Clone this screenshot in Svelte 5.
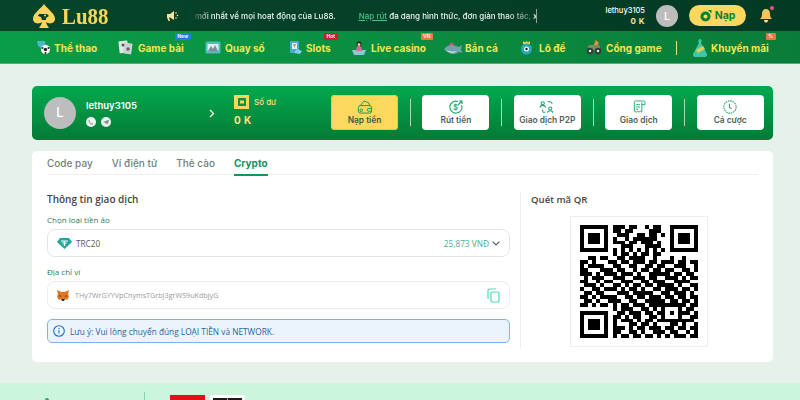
<script>
  const qr = [
    "11111110111011001011001111111",
    "10000010110110000111001000001",
    "10111010011100110110101011101",
    "10111010100101111110001011101",
    "10111010111011011101001011101",
    "10000010001110001111001000001",
    "11111110101010101010101111111",
    "00000000101101011011000000000",
    "00110110011011110010001001000",
    "11010001101101110110111011011",
    "10111100110011001101100111001",
    "11000111011001011011011001101",
    "11101011101110100111110110110",
    "01011100111001110110011101011",
    "11001011001110011011100111100",
    "01110100110101101101111010011",
    "10011011101011010011011101101",
    "01101100011101111100110111010",
    "11010111100110110111011011011",
    "01101001110011001111101101101",
    "11010110101101110111111111011",
    "00000000101110011010100010110",
    "11111110011011101101101011101",
    "10000010110101100110100010011",
    "10111010101110101101111111110",
    "10111010100011011010001101001",
    "10111010111010110111011011011",
    "10000010110011010011101100101",
    "11111110101101101101010111011"
  ];
  const qrPath = qr
    .flatMap((row, y) => [...row].map((c, x) => (c === "1" ? `M${x} ${y}h1v1h-1z` : "")))
    .join("");
  const tabs = ["Code pay", "Ví điện tử", "Thẻ cào", "Crypto"];
</script>

<div class="page">
  <header class="top">
    <div class="logo">
      <svg width="24" height="26" viewBox="0 0 24 26">
        <path d="M12 1C9 6 1 10 1 16c0 4 5 6 9 3-.3 2-1.500 4-3 6h10c-1.500-2-2.700-4-3-6 4 3 9 1 9-3C23 10 15 6 12 1z" fill="#fcd65b" />
        <path d="M7 11h8l2 2-3 2v2H10l-1-3-3-1z" fill="#063f26" />
        <circle cx="13" cy="12.500" r="1" fill="#fcd65b" />
      </svg>
      <span class="logo-text">Lu88</span>
    </div>
    <svg class="mega" width="12" height="10" viewBox="0 0 12 10">
      <path d="M0 3h3l4-3v9L3 6.500H2L3 10H1.500L0 6.500z" fill="#f6e3a0" />
      <circle cx="9" cy="2" r=".8" fill="#f6e3a0" /><circle cx="10.500" cy="4.500" r=".8" fill="#f6e3a0" /><circle cx="9" cy="7" r=".8" fill="#f6e3a0" />
    </svg>
    <div class="marquee">
      <span class="marquee-text">Tin tức mới nhất về mọi hoạt động của Lu88.<a class="mq-link" href="#top">Nạp rút</a> đa dạng hình thức, đơn giản thao tác, xử lý nhanh</span>
    </div>
    <div class="userbox">
      <span class="uname">lethuy3105</span>
      <b class="ubal">0 K</b>
    </div>
    <div class="ava-s">L</div>
    <button class="nap">
      <svg width="12" height="12" viewBox="0 0 12 12">
        <circle cx="5.500" cy="6.500" r="5" fill="#0a7f3a" />
        <circle cx="5.500" cy="6.500" r="2" fill="#fdd85d" />
        <path d="M8 0h3.500v3.500z" fill="#0a7f3a" />
      </svg>
      Nạp
    </button>
    <div class="bell">
      <svg width="14" height="15" viewBox="0 0 14 15">
        <path d="M7 1c3 0 4 2.500 4 5 0 3 1 4 2 5H1c1-1 2-2 2-5 0-2.500 1-5 4-5z" fill="#f5c35a" />
        <path d="M5 12h4c0 2-1 2.500-2 2.500S5 14 5 12z" fill="#f9dc8b" />
      </svg>
      <i class="dot"></i>
    </div>
  </header>

  <nav class="nav">
    <a class="nv o18" href="#top">
      <svg width="15" height="15" viewBox="0 0 15 15"><path d="M1 1h8l1 5-5 2-3-2z" fill="#4bb6c9" /><circle cx="9.500" cy="9.500" r="4.500" fill="#fff" /><circle cx="9.500" cy="9.500" r="1.700" fill="#222" /><circle cx="6.500" cy="8" r="1" fill="#222" /><circle cx="12.500" cy="8" r="1" fill="#222" /><circle cx="9.500" cy="13" r="1" fill="#222" /></svg>
      <span>Thể thao</span>
    </a>
    <a class="nv o20" href="#top">
      <svg width="15" height="15" viewBox="0 0 15 15"><rect x="1" y="1" width="9" height="12" rx="1" fill="#dfe7e6" transform="rotate(-6 5 7)" /><rect x="6" y="3" width="8" height="11" rx="1" fill="#c7d4d2" transform="rotate(8 10 8)" /><circle cx="5" cy="5" r="1.500" fill="#555" /><circle cx="10" cy="9" r="1.700" fill="#6b5a62" /></svg>
      <span class="lbl">Game bài<i class="tag blue">New</i></span>
    </a>
    <a class="nv o20" href="#top">
      <svg width="16" height="13" viewBox="0 0 16 13"><rect x=".5" y=".5" width="15" height="12" rx="1.500" fill="#4cc0bd" /><rect x="2.500" y="3" width="11" height="7" fill="#d8f3ee" /><path d="M3 10l3-5 2 3 2-4 3 6z" fill="#7a8ea0" /></svg>
      <span>Quay số</span>
    </a>
    <a class="nv o18" href="#top">
      <svg width="15" height="15" viewBox="0 0 15 15"><rect x="2" y="1" width="9" height="12" rx="1" fill="#49a9d4" /><rect x="4" y="3" width="5" height="6" fill="#dff1f5" /><path d="M5 4h3l-1.500 4z" fill="#e5895a" /><path d="M9 9l5 2-2 3-6-1z" fill="#7fd0e6" /></svg>
      <span class="lbl">Slots<i class="tag red">Hot</i></span>
    </a>
    <a class="nv o20" href="#top">
      <svg width="16" height="16" viewBox="0 0 16 16"><path d="M1 10h14l-2 5H3z" fill="#86c9d8" /><circle cx="8" cy="4" r="2.500" fill="#2a1c1c" /><path d="M5 11c0-3 1-5 3-5s3 2 3 5z" fill="#d66b8e" /><circle cx="8" cy="4.500" r="1.500" fill="#eec2a8" /></svg>
      <span class="lbl">Live casino<i class="tag orange">VN</i></span>
    </a>
    <a class="nv o21" href="#top">
      <svg width="19" height="12" viewBox="0 0 19 12"><path d="M0 7c3-4 8-5 12-3l3 1 3-2-1 5 2 3-4-1c-4 3-10 3-15-3z" fill="#6fa3b0" /><path d="M5 3l3-3 2 3z" fill="#d5566a" /><path d="M2 8c4 2 8 2 11 1-3 3-8 2-11-1z" fill="#e6f2f2" /></svg>
      <span>Bắn cá</span>
    </a>
    <a class="nv o19" href="#top">
      <svg width="13" height="15" viewBox="0 0 13 15"><path d="M3 1l2 1.500L6.500 1 8 2.500 10 1v3H3z" fill="#f0cf55" /><circle cx="6.500" cy="9" r="5.500" fill="#27a7b8" /><circle cx="6.500" cy="9" r="2.500" fill="#fff" /><circle cx="6.500" cy="9" r="1.200" fill="#123" /></svg>
      <span>Lô đề</span>
    </a>
    <a class="nv o20" href="#top">
      <svg width="16" height="15" viewBox="0 0 16 15"><path d="M10 0l3 3-2 3H7z" fill="#ef8a3a" /><rect x="2" y="5" width="12" height="5" rx="2" fill="#7d8c5b" /><circle cx="4" cy="11" r="3.200" fill="#2f3b3a" /><circle cx="12" cy="11" r="3.200" fill="#2f3b3a" /><circle cx="4" cy="11" r="1.300" fill="#e6e6d8" /><circle cx="12" cy="11" r="1.300" fill="#e6e6d8" /></svg>
      <span>Cổng game</span>
    </a>
    <i class="nav-div"></i>
    <a class="nv o19" href="#top">
      <svg width="16" height="18" viewBox="0 0 16 18"><path d="M8 0c2 0 2 3 1 4l6 11c.5 2-1 3-2 3H3c-1 0-2.500-1-2-3L7 4C6 3 6 0 8 0z" fill="#3fc7a5" /><path d="M4 11l7-4 2 3-7 4z" fill="#d9cf58" /></svg>
      <span class="lbl">Khuyến mãi<i class="tag orange">%</i></span>
    </a>
  </nav>

  <main class="main">
    <section class="hero">
      <div class="ava">L</div>
      <div class="who">
        <b>lethuy3105</b>
        <div class="contact">
          <svg width="10" height="10" viewBox="0 0 10 10"><circle cx="5" cy="5" r="5" fill="#eef5f1" /><path d="M3 2.500l1 1.500-.5.700c.4.800 1 1.400 1.800 1.800L6 6l1.500 1C7 8 6 8 4.500 7 3 6 2 4 3 2.500z" fill="#7d9a8b" /></svg>
          <svg width="10" height="10" viewBox="0 0 10 10"><circle cx="5" cy="5" r="5" fill="#eef5f1" /><path d="M2 5l6-2.500L7 7.500 5 6.300 4.200 7 4 5.700z" fill="#7d9a8b" /></svg>
        </div>
      </div>
      <svg class="chev" width="6" height="9" viewBox="0 0 6 9"><path d="M1 1l3.500 3.500L1 8" fill="none" stroke="#fff" stroke-width="1.300" /></svg>
      <div class="bal">
        <div class="bal-top">
          <svg width="15" height="14" viewBox="0 0 15 14"><path d="M1 0h14v14H1c-.6 0-1-.4-1-1V1c0-.6.4-1 1-1z" fill="#fcd65b" /><rect x="4" y="3" width="8" height="8" fill="#0a9446" /><rect x="6" y="5.500" width="4" height="3" fill="#fcd65b" /></svg>
          <span>Số dư</span>
        </div>
        <b>0 K</b>
      </div>
      <div class="acts">
        <button class="act yellow">
          <svg width="16" height="15" viewBox="0 0 16 15" fill="none" stroke="#12925a"><path d="M3 6l4-5 5 2 1 3" /><rect x="1" y="6" width="14" height="8" rx="2" /><circle cx="4" cy="11" r="1.400" /><path d="M15 9h-3a1 1 0 000 3h3" /></svg>
          Nạp tiền
        </button>
        <i class="sep"></i>
        <button class="act">
          <svg width="14" height="14" viewBox="0 0 14 14" fill="none" stroke="#1fa86c" stroke-width="1.100"><path d="M9 1.500A6 6 0 1012.500 5" /><path d="M9 5l4-4M10 1h3v3" /><text x="4.200" y="10" font-size="7" font-weight="700" fill="#1fa86c" stroke="none" font-family="Inter">$</text></svg>
          Rút tiền
        </button>
        <i class="sep"></i>
        <button class="act">
          <svg width="15" height="13" viewBox="0 0 15 13" fill="none" stroke="#1fa86c"><circle cx="3.500" cy="3" r="1.500" /><path d="M1 7c0-1.500 1-2 2.500-2S6 5.500 6 7" /><circle cx="10.500" cy="8" r="1.500" /><path d="M8 12c0-1.500 1-2 2.500-2s2.500.5 2.500 2" /><path d="M8 1.500h3l1.500 2M3 9l1 2.500h2" /></svg>
          Giao dịch P2P
        </button>
        <i class="sep"></i>
        <button class="act">
          <svg width="14" height="15" viewBox="0 0 14 15" fill="none" stroke="#1fa86c"><path d="M3 1h9a1.500 1.500 0 011.500 1.500V5H10" /><path d="M10 2.500V13l-1.500-1L7 13l-1.500-1L4 13l-2-1V2.500A1.500 1.500 0 013 1" /><path d="M4 5h4M4 7.500h4M4 10h2" /></svg>
          Giao dịch
        </button>
        <i class="sep"></i>
        <button class="act">
          <svg width="13" height="13" viewBox="0 0 13 13" fill="none" stroke="#1fa86c"><circle cx="6.500" cy="6.500" r="5.700" stroke-dasharray="1.500 .7" /><path d="M6 3.500v3.300l2 1.500" /></svg>
          Cá cược
        </button>
      </div>
    </section>

    <section class="panel">
      <div class="tabs">
        {#each tabs as t, i}
          <span class={i === 3 ? "tab on" : "tab"}>{t}</span>
        {/each}
      </div>
      <div class="body">
        <div class="form">
          <h3>Thông tin giao dịch</h3>
          <label for="coin">Chọn loại tiền ảo</label>
          <div class="field sel" id="coin">
            <svg width="15" height="11" viewBox="0 0 15 11"><path d="M3 0h9l3 4-7.500 7L0 4z" fill="#1fa89a" /><path d="M4 2.500h7v1H8.200v1c1 0 1.800.2 1.800.5s-.8.500-1.800.500V8H6.800V5.500C5.800 5.500 5 5.300 5 5s.8-.5 1.800-.5v-1H4z" fill="#fff" /></svg>
            <span class="coin">TRC20</span>
            <span class="rate">25,873 VNĐ</span>
            <svg width="8" height="5" viewBox="0 0 8 5"><path d="M.7.700L4 4 7.300.700" fill="none" stroke="#555" stroke-width="1.100" /></svg>
          </div>
          <label class="second" for="addr">Địa chỉ ví</label>
          <div class="field ad" id="addr">
            <svg width="12" height="11" viewBox="0 0 12 11"><path d="M0 0l4.500 2h3L12 0l-1 4 1 3-2 3-2.500-1h-3L2 10 0 7l1-3z" fill="#e2761b" /><path d="M4 9h4l-1 2H5zM2 5l2 1-1 1zM10 5L8 6l1 1z" fill="#3b2a1e" /></svg>
            <span class="addr">THy7WrGYYVpCnymsTGrbJ3grWS9uKdbjyG</span>
            <svg width="13" height="15" viewBox="0 0 13 15" fill="none" stroke="#4ddcb0" stroke-width="1.200"><path d="M9 1H2.500A1.500 1.500 0 001 2.500V11" /><rect x="4" y="4" width="8" height="10" rx="1" /></svg>
          </div>
          <div class="note">
            <svg width="12" height="12" viewBox="0 0 12 12" fill="none" stroke="#1f6fc0" stroke-width="1.100"><circle cx="6" cy="6" r="5.300" /><path d="M6 5.300v3.200" /><path d="M6 3v1.200" /></svg>
            <span><b>Lưu ý:</b> Vui lòng chuyển đúng LOẠI TIỀN và NETWORK.</span>
          </div>
        </div>
        <div class="qrcol">
          <h3>Quét mã QR</h3>
          <div class="qrbox">
            <svg width="118" height="113" viewBox="0 0 29 29" preserveAspectRatio="none" shape-rendering="crispEdges"><path d={qrPath} fill="#000" /></svg>
          </div>
        </div>
      </div>
    </section>
  </main>

  <footer class="foot">
    <i class="f-dot"></i>
    <i class="f-line"></i>
    <i class="f-red"></i>
    <i class="f-black"></i>
  </footer>
</div>

<style>
  :global(body) { margin: 0; background: #e7f1ec; overflow: hidden; }
  .page { width: 800px; height: 400px; overflow: hidden; font-family: "Open Sans", "Liberation Sans", sans-serif; display: flex; flex-direction: column; }
  a { text-decoration: none; color: inherit; }
  i { font-style: normal; display: block; }
  button { border: 0; font: inherit; padding: 0; }
  h3 { margin: 0; font-size: 10px; font-weight: 600; color: #454545; line-height: 14px; }

  .top { height: 31px; flex: none; background: linear-gradient(90deg, #06452a, #033a24); display: flex; align-items: center; padding-left: 32px; box-sizing: border-box; }
  .logo { width: 135px; display: flex; align-items: center; flex: none; }
  .logo svg { flex: none; }
  .logo-text { font: bold 24px "Liberation Serif", serif; color: #fcd65b; margin-left: 6px; transform: scaleX(.87); transform-origin: left center; line-height: 1; }
  .mega { flex: none; }
  .marquee { width: 347px; margin-left: 11px; height: 14px; overflow: hidden; border-right: 1px solid #8fa89a; box-sizing: border-box; flex: none; -webkit-mask-image: linear-gradient(90deg, transparent 0, #000 22px, #000 315px, rgba(0,0,0,.4) 340px, #000 345px); mask-image: linear-gradient(90deg, transparent 0, #000 22px, #000 315px, rgba(0,0,0,.4) 340px, #000 345px); }
  .marquee-text { display: block; white-space: nowrap; font: 500 8px/14px "Inter", sans-serif; color: #eef3ef; margin-left: -24px; }
  .mq-link { color: #4fbf8a; text-decoration: underline; margin-left: 23px; margin-right: 0; }
  .userbox { margin-left: 71px; width: 37px; flex: none; display: flex; flex-direction: column; align-items: flex-end; line-height: 10px; color: #fff; }
  .uname { font: 500 7.5px/10px "Inter", sans-serif; white-space: nowrap; }
  .ubal { font: 700 8px/10px "Inter", sans-serif; color: #f4e3a2; letter-spacing: .5px; }
  .ava-s { width: 22px; height: 22px; margin-left: 11px; flex: none; border-radius: 50%; background: #bdbdbd; color: #fff; font: 500 11px/22px "Inter", sans-serif; text-align: center; }
  .nap { width: 57px; height: 21px; margin-left: 11px; flex: none; background: #fdd85d; border-radius: 11px; color: #0a7f3a; font: 700 10.5px "Inter", sans-serif; display: flex; align-items: center; justify-content: center; gap: 3px; }
  .bell { width: 14px; margin-left: 13px; position: relative; height: 15px; flex: none; }
  .bell svg { display: block; }
  .dot { position: absolute; right: -1px; top: -2px; width: 4px; height: 4px; border-radius: 50%; background: #f2547d; }

  .nav { height: 33px; flex: none; box-sizing: border-box; height: 33px; background: linear-gradient(90deg, #0a9d47, #0a7c39); border-bottom: 1px solid #4fae7c; display: grid; grid-template-columns: 82px 87px 83px 63px 93px 76px 66px 90px 16px auto; align-items: center; padding: 1px 0 0 36px; }
  .nv { display: grid; align-items: center; font: 700 10px/14px "Inter", sans-serif; color: #f4e64e; white-space: nowrap; justify-content: start; }
  .o18 { grid-template-columns: 18px auto; }
  .o19 { grid-template-columns: 19px auto; }
  .o20 { grid-template-columns: 20px auto; }
  .o21 { grid-template-columns: 21px auto; }
  .lbl { position: relative; }
  .nav-div { width: 1px; height: 14px; background: #e9dd8b; }
  .tag { position: absolute; right: -7px; top: -8px; height: 7px; padding: 0 2.500px; border-radius: 1px; font: 600 5px/7px "Inter", sans-serif; color: #fff; }
  .blue { background: #1a7fe0; }
  .red { background: #c8202c; }
  .orange { background: #f0743e; }

  .main { flex: 1; min-height: 0; padding: 22px 27px 21px 32px; display: flex; flex-direction: column; gap: 11px; }
  .hero { height: 54px; flex: none; border-radius: 5px; background: linear-gradient(180deg, #03a94f, #057a35); display: flex; align-items: center; padding: 0 10px 0 12px; box-sizing: border-box; }
  .ava { width: 32px; height: 32px; flex: none; border-radius: 50%; background: #bdbdbd; color: #fff; font: 500 13px/30px "Inter", sans-serif; text-align: center; }
  .who { margin-left: 10px; width: 120px; flex: none; color: #fff; padding-top: 1px; }
  .who b { display: block; font: 600 9.5px/12px "Inter", sans-serif; }
  .contact { display: flex; gap: 5px; margin: 5px 0 0 0; }
  .contact svg { display: block; }
  .chev { flex: none; margin-left: 3px; }
  .bal { margin-left: 19px; width: 97px; flex: none; margin-top: -5px; }
  .bal-top { display: flex; align-items: center; gap: 5px; font: 500 8px/14px "Inter", sans-serif; color: #fce27b; }
  .bal b { display: block; font: 700 10px/12px "Inter", sans-serif; color: #fce27b; margin-top: 5px; letter-spacing: .5px; }
  .acts { display: flex; align-items: center; gap: 12px; margin-top: -1px; }
  .act { width: 67px; height: 35px; flex: none; border-radius: 4px; background: #fff; color: #4d5f58; font: 600 8.4px/10px "Inter", sans-serif; display: flex; flex-direction: column; align-items: center; justify-content: center; gap: 1px; white-space: nowrap; padding-bottom: 1px; box-sizing: border-box; }
  .act svg { width: 16px; height: 14px; display: block; }
  .yellow { background: #fcd95c; box-shadow: inset 0 0 0 1px #e8c550; color: #3f5a3c; }
  .sep { width: 1px; height: 27px; background: #a9d9bd; margin: 0 -.6px 0 0; flex: none; }

  .panel { flex: 1; min-height: 0; background: #fff; border-radius: 5px; padding: 0 15px; box-sizing: border-box; }
  .tabs { display: flex; gap: 19px; height: 24px; border-bottom: 1px solid #eff1f0; box-sizing: border-box; font: 500 10px/24px "Inter", sans-serif; color: #76807b; }
  .tab { height: 23px; }
  .on { color: #17935f; font-weight: 700; border-bottom: 2px solid #17935f; }
  .body { display: flex; margin-top: 17px; }
  .form { width: 463px; flex: none; }
  label { display: block; font-size: 8px; line-height: 11px; color: #2f7a5f; margin-top: 8px; font-weight: 500; }
  .second { margin-top: 9px; }
  .field { height: 28px; margin-top: 4px; box-sizing: border-box; border-radius: 8px; display: flex; align-items: center; padding: 0 9px; }
  .sel { border: 1.500px solid #e4e4e4; }
  .ad { border: 1px solid #ececec; }
  .coin { margin-left: 4px; font-size: 8.200px; color: #5a5a5a; flex: 1; }
  .rate { font-size: 8.300px; color: #4aae8c; margin-right: 3px; }
  .addr { margin-left: 6px; font-size: 7.200px; color: #9a9a9a; flex: 1; }
  .note { height: 24px; margin-top: 10px; box-sizing: border-box; background: #ebf4fd; border: 1px solid #7db4ef; border-radius: 5px; display: flex; align-items: center; gap: 5px; padding-left: 5px; font-size: 8.300px; color: #26639f; }
  .note b { font-weight: 500; }
  .qrcol { margin-left: 10px; padding-left: 10px; border-left: 1px solid #eeeeee; flex: 1; height: 156px; box-sizing: border-box; display: flex; flex-direction: column; padding-top: 1px; }
  .qrcol h3 { font-size: 9.600px; }
  .qrbox { width: 138px; height: 131px; margin: 9px 0 0 39px; border: 1px solid #eeeeee; box-sizing: border-box; display: flex; align-items: center; justify-content: center; }
  .qrbox svg { display: block; }

  .foot { height: 17px; flex: none; background: #ccf5de; display: flex; align-items: flex-start; }
  .f-dot { width: 4px; height: 4px; border-radius: 50%; background: #2fa864; margin: 15px 0 0 45px; }
  .f-line { width: 1px; height: 17px; background: #7ad6b5; margin: 9px 0 0 95px; }
  .f-red { width: 35px; height: 17px; background: #e0101a; margin: 12px 0 0 25px; }
  .f-black { width: 35px; height: 17px; margin: 12px 0 0 5px; background: linear-gradient(90deg, #1a1a1a 48%, #e09a20 48%, #e09a20 52%, #1a1a1a 52%); box-shadow: inset 0 0 0 3px #fff; }
</style>
